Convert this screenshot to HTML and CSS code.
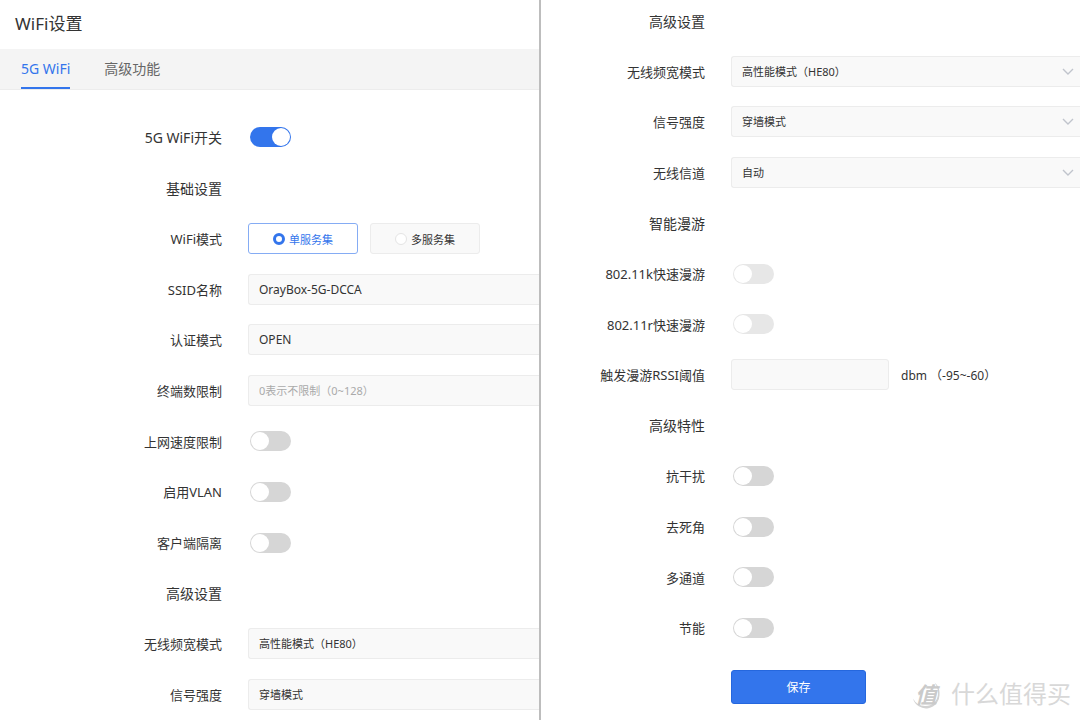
FILE: index.html
```html
<!DOCTYPE html>
<html lang="zh-CN">
<head>
<meta charset="utf-8">
<title>WiFi设置</title>
<link rel="stylesheet" href="styles.css">
</head>
<body>
<main class="page">
  <section class="panel panel-left">
    <h1 class="title">WiFi设置</h1>
    <nav class="tabs">
      <a class="tab tab-active" href="#wifi">5G WiFi</a>
      <a class="tab" href="#advanced">高级功能</a>
    </nav>
    <form class="rows">
      <div class="row"><label class="label heading" for="wifi-on">5G WiFi开关</label><input class="switch" type="checkbox" id="wifi-on" checked></div>
      <div class="row"><h2 class="label heading">基础设置</h2></div>
      <div class="row" role="radiogroup" aria-labelledby="mode-label">
        <span class="label" id="mode-label">WiFi模式</span>
        <div class="options">
          <label class="option option-selected"><input class="radio" type="radio" name="mode" checked>单服务集</label>
          <label class="option"><input class="radio" type="radio" name="mode">多服务集</label>
        </div>
      </div>
      <div class="row"><label class="label" for="ssid">SSID名称</label><input class="field field-latin" type="text" id="ssid" value="OrayBox-5G-DCCA"></div>
      <div class="row"><label class="label" for="auth">认证模式</label><select class="field field-latin" id="auth"><option>OPEN</option></select></div>
      <div class="row"><label class="label" for="limit">终端数限制</label><input class="field" type="text" id="limit" placeholder="0表示不限制（0~128）"></div>
      <div class="row"><label class="label" for="speed">上网速度限制</label><input class="switch" type="checkbox" id="speed"></div>
      <div class="row"><label class="label" for="vlan">启用VLAN</label><input class="switch" type="checkbox" id="vlan"></div>
      <div class="row"><label class="label" for="isolate">客户端隔离</label><input class="switch" type="checkbox" id="isolate"></div>
      <div class="row"><h2 class="label heading">高级设置</h2></div>
      <div class="row"><label class="label" for="band-a">无线频宽模式</label><select class="field" id="band-a"><option>高性能模式（HE80）</option></select></div>
      <div class="row"><label class="label" for="signal-a">信号强度</label><select class="field" id="signal-a"><option>穿墙模式</option></select></div>
    </form>
  </section>

  <section class="panel panel-right">
    <div class="row row-first"><h2 class="label heading">高级设置</h2></div>
    <form class="rows" id="advanced-form">
      <div class="row"><label class="label" for="band">无线频宽模式</label>
        <div class="select"><select class="field" id="band"><option>高性能模式（HE80）</option></select><svg class="chevron" viewBox="0 0 12 8"><path d="M1 1l5 5 5-5"/></svg></div></div>
      <div class="row"><label class="label" for="signal">信号强度</label>
        <div class="select"><select class="field" id="signal"><option>穿墙模式</option></select><svg class="chevron" viewBox="0 0 12 8"><path d="M1 1l5 5 5-5"/></svg></div></div>
      <div class="row"><label class="label" for="channel">无线信道</label>
        <div class="select"><select class="field" id="channel"><option>自动</option></select><svg class="chevron" viewBox="0 0 12 8"><path d="M1 1l5 5 5-5"/></svg></div></div>
      <div class="row"><h2 class="label heading">智能漫游</h2></div>
      <div class="row"><label class="label" for="roam-k">802.11k快速漫游</label><input class="switch" type="checkbox" id="roam-k" disabled></div>
      <div class="row"><label class="label" for="roam-r">802.11r快速漫游</label><input class="switch" type="checkbox" id="roam-r" disabled></div>
      <div class="row"><label class="label" for="rssi">触发漫游RSSI阈值</label><input class="field field-short" type="text" id="rssi"><span class="unit">dbm （-95~-60）</span></div>
      <div class="row"><h2 class="label heading">高级特性</h2></div>
      <div class="row"><label class="label" for="noise">抗干扰</label><input class="switch" type="checkbox" id="noise"></div>
      <div class="row"><label class="label" for="corner">去死角</label><input class="switch" type="checkbox" id="corner"></div>
      <div class="row"><label class="label" for="multi">多通道</label><input class="switch" type="checkbox" id="multi"></div>
      <div class="row"><label class="label" for="power">节能</label><input class="switch" type="checkbox" id="power"></div>
    </form>
    <div class="actions"><button class="save" type="submit" form="advanced-form">保存</button></div>
    <div class="watermark">
      <span class="logo"><svg class="ring" viewBox="0 0 30 30"><path d="M23.500 3.500Q29 8 28.500 15A13.500 13.500 0 0 1 2 19.500Q6 27 14 27A12.500 12.500 0 0 0 27 15Q27.500 9 23.500 3.500Z"/></svg><span class="logo-char">值</span></span>
      <span>什么值得买</span>
    </div>
  </section>
</main>
</body>
</html>
```
FILE: styles.css
```css
* { box-sizing: border-box; }

body {
  margin: 0;
  background: #fff;
  color: #333;
  font-family: "Noto Sans", "Noto Sans CJK SC", sans-serif;
  font-size: 13px;
}

input, select, button { font-family: inherit; }

.page {
  display: grid;
  grid-template-columns: 1fr 1fr;
  min-height: 100vh;
}

.panel {
  display: flex;
  flex-direction: column;
  min-width: 0;
  --label-width: 222px;
}

.panel-left { border-right: 1px solid #bdbdbd; }

.panel-right {
  position: relative;
  border-left: 1px solid #bdbdbd;
  --label-width: 164px;
}

.title {
  margin: 0;
  padding: 0 15px;
  height: 49px;
  line-height: 48px;
  font-size: 17px;
  font-weight: 400;
  color: #333;
}

.tabs {
  display: flex;
  gap: 34px;
  height: 41px;
  padding: 0 21px;
  background: #f4f4f4;
  border-bottom: 1px solid #ececec;
}

.tab {
  height: 40px;
  line-height: 40px;
  font-size: 14px;
  color: #666;
  text-decoration: none;
}

.tab-active {
  color: #3375ec;
  border-bottom: 2px solid #3375ec;
}

.rows {
  flex: 1;
  display: grid;
  grid-auto-rows: 1fr;
}

.panel-left .rows { padding-top: 22px; }

.row {
  display: flex;
  align-items: center;
  gap: 26px;
  min-height: 40px;
}

.row-first {
  min-height: 42px;
  margin-bottom: 4px;
}

.label {
  flex: none;
  width: var(--label-width);
  text-align: right;
  white-space: nowrap;
}

.heading {
  margin: 0;
  font-size: 14px;
  font-weight: 400;
}

.field {
  flex: 1;
  width: 100%;
  min-width: 0;
  height: 31px;
  margin: 0;
  padding: 0 10px;
  appearance: none;
  background: #f9f9f9;
  border: 1px solid #ececec;
  border-right: 0;
  border-radius: 3px 0 0 3px;
  color: #333;
  font-size: 11px;
}

.field::placeholder { color: #aaa; }

.field-latin { font-size: 12px; }

.field-short {
  flex: none;
  width: 158px;
  border-right: 1px solid #ececec;
  border-radius: 3px;
}

.unit { margin-left: -14px; font-size: 12px; }

.select {
  position: relative;
  flex: 1;
  display: flex;
}

.chevron {
  position: absolute;
  top: 12px;
  right: 6px;
  width: 12px;
  height: 8px;
  fill: none;
  stroke: #c0c4cc;
  stroke-width: 1.4;
  pointer-events: none;
}

.switch {
  display: flex;
  align-items: center;
  appearance: none;
  width: 41px;
  height: 20px;
  margin: 0 2px;
  padding: 1px;
  border-radius: 10px;
  background: #d6d6d6;
}

.switch::before {
  content: "";
  width: 18px;
  height: 18px;
  border-radius: 50%;
  background: #fff;
}

.switch:checked { background: #3375ec; justify-content: flex-end; }
.switch:disabled { background: #e7e7e7; }

.options { display: flex; gap: 12px; }

.option {
  display: flex;
  align-items: center;
  justify-content: center;
  gap: 4px;
  width: 110px;
  height: 31px;
  background: #f9f9f9;
  border: 1px solid #ececec;
  border-radius: 3px;
  font-size: 11px;
}

.option-selected {
  background: #fff;
  border-color: #85acf4;
  color: #3375ec;
}

.radio {
  appearance: none;
  width: 12px;
  height: 12px;
  margin: 0;
  border: 1px solid #e4e4e4;
  border-radius: 50%;
  background: #fff;
}

.radio:checked { border: 3px solid #3375ec; }

.actions {
  height: 67px;
  padding: 17px 0 0 190px;
}

.save {
  width: 135px;
  height: 34px;
  padding: 0;
  border: 1px solid #2567de;
  border-radius: 3px;
  background: #3375ec;
  color: #fff;
  font-size: 12px;
}

.watermark {
  position: absolute;
  right: 9px;
  bottom: 8px;
  display: flex;
  align-items: center;
  gap: 10px;
  color: #d8d8d8;
  font-size: 24px;
  line-height: 36px;
  white-space: nowrap;
}

.logo {
  display: grid;
  place-items: center;
  width: 30px;
  height: 30px;
}

.ring, .logo-char { grid-area: 1 / 1; }

.ring {
  width: 30px;
  height: 30px;
  fill: #d2d2d2;
}

.logo-char {
  color: #cacaca;
  font-size: 22px;
  font-weight: 700;
  font-style: italic;
  line-height: 30px;
}
```
